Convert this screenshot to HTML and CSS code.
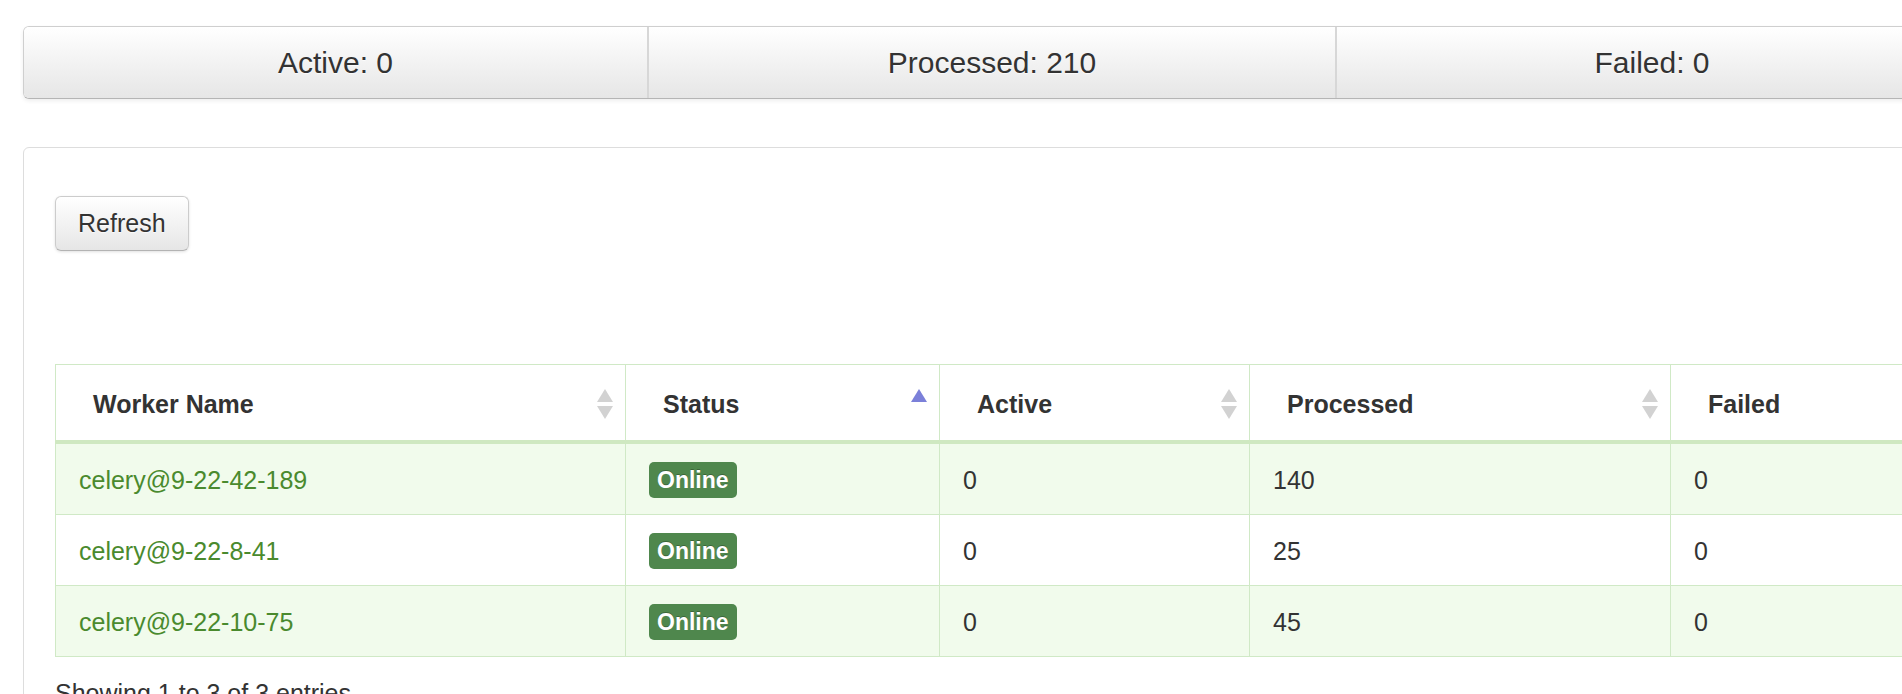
FILE: index.html
```html
<!DOCTYPE html>
<html lang="en">
<head>
<meta charset="utf-8">
<title>Workers</title>
<link rel="stylesheet" href="styles.css">
</head>
<body>
<div class="page">
  <div class="stats">
    <div class="stat">Active: 0</div>
    <div class="stat">Processed: 210</div>
    <div class="stat">Failed: 0</div>
  </div>

  <div class="panel">
    <button class="btn" type="button">Refresh</button>

    <table class="workers">
      <colgroup>
        <col class="c-name">
        <col class="c-status">
        <col class="c-active">
        <col class="c-processed">
        <col class="c-failed">
      </colgroup>
      <thead>
        <tr>
          <th><div class="th-inner"><span>Worker Name</span>
            <svg class="sort" viewBox="0 0 16 30" width="16" height="30"><polygon points="8,0 16,13 0,13"/><polygon points="0,17 16,17 8,30"/></svg></div></th>
          <th><div class="th-inner"><span>Status</span>
            <svg class="sort asc" viewBox="0 0 16 30" width="16" height="30"><polygon points="8,0 16,13 0,13"/></svg></div></th>
          <th><div class="th-inner"><span>Active</span>
            <svg class="sort" viewBox="0 0 16 30" width="16" height="30"><polygon points="8,0 16,13 0,13"/><polygon points="0,17 16,17 8,30"/></svg></div></th>
          <th><div class="th-inner"><span>Processed</span>
            <svg class="sort" viewBox="0 0 16 30" width="16" height="30"><polygon points="8,0 16,13 0,13"/><polygon points="0,17 16,17 8,30"/></svg></div></th>
          <th><div class="th-inner"><span>Failed</span>
            <svg class="sort" viewBox="0 0 16 30" width="16" height="30"><polygon points="8,0 16,13 0,13"/><polygon points="0,17 16,17 8,30"/></svg></div></th>
        </tr>
      </thead>
      <tbody>
        <tr class="odd">
          <td><a class="worker" href="#">celery@9-22-42-189</a></td>
          <td><span class="badge">Online</span></td>
          <td>0</td>
          <td>140</td>
          <td>0</td>
        </tr>
        <tr class="even">
          <td><a class="worker" href="#">celery@9-22-8-41</a></td>
          <td><span class="badge">Online</span></td>
          <td>0</td>
          <td>25</td>
          <td>0</td>
        </tr>
        <tr class="odd">
          <td><a class="worker" href="#">celery@9-22-10-75</a></td>
          <td><span class="badge">Online</span></td>
          <td>0</td>
          <td>45</td>
          <td>0</td>
        </tr>
      </tbody>
    </table>

    <div class="info">Showing 1 to 3 of 3 entries</div>
  </div>
</div>
</body>
</html>
```

FILE: styles.css
```css
html, body {
  margin: 0;
  padding: 0;
  overflow: hidden;
  background: #fff;
}

body {
  font-family: "Liberation Sans", Arial, Helvetica, sans-serif;
  color: #333;
}

.page {
  width: 1944px;
  padding: 26px 0 0 23px;
}

/* ---------- stats bar ---------- */
.stats {
  display: grid;
  grid-template-columns: 623px 688px 632px;
  height: 73px;
  box-sizing: border-box;
  border: 1px solid #cfcfcf;
  border-bottom-color: #b5b5b5;
  border-radius: 6px;
  overflow: hidden;
  box-shadow: 0 2px 4px rgba(0, 0, 0, 0.07);
}

.stat {
  display: flex;
  align-items: center;
  justify-content: center;
  font-size: 30px;
  color: #333;
  text-shadow: 0 1px 1px rgba(255, 255, 255, 0.75);
  background: linear-gradient(#ffffff, #e6e6e6);
}

.stat + .stat {
  border-left: 2px solid #d7d7d7;
}

/* ---------- panel ---------- */
.panel {
  margin-top: 48px;
  height: 640px;
  border: 1px solid #dddddd;
  border-radius: 6px;
  padding: 48px 0 0 31px;
}

.btn {
  display: block;
  font-family: "Liberation Sans", Arial, Helvetica, sans-serif;
  font-size: 25px;
  line-height: 35px;
  padding: 9px 22px;
  color: #333;
  border: 1px solid #cccccc;
  border-bottom-color: #b3b3b3;
  border-radius: 6px;
  background: linear-gradient(#ffffff, #e6e6e6);
  text-shadow: 0 1px 1px rgba(255, 255, 255, 0.75);
  box-shadow: inset 0 1px 0 rgba(255, 255, 255, 0.2), 0 1px 3px rgba(0, 0, 0, 0.12);
}

/* ---------- table ---------- */
.workers {
  margin-top: 113px;
  width: 1880px;
  table-layout: fixed;
  border-collapse: collapse;
  font-size: 25px;
  line-height: 36px;
}

.c-name { width: 570px; }
.c-status { width: 314px; }
.c-active { width: 310px; }
.c-processed { width: 421px; }
.c-failed { width: 265px; }

.workers th,
.workers td {
  border: 1px solid #d0e9c6;
  text-align: left;
}

.workers th {
  font-weight: bold;
  background: #fff;
  padding: 21px 12px 18px 37px;
  border-bottom: 4px solid #cfe8c1;
}

.th-inner {
  display: flex;
  align-items: center;
  justify-content: space-between;
}

.sort {
  display: block;
  flex: none;
  fill: #d2d2d2;
}

.sort.asc {
  fill: #7b80d9;
}

.workers td {
  padding: 18px 23px 16px;
  color: #333;
}

.workers tr.odd td {
  background: #f1fbec;
}

.workers tr.even td {
  background: #ffffff;
}

.worker {
  color: #4a8a2e;
  text-decoration: none;
}

.badge {
  display: inline-block;
  vertical-align: top;
  height: 36px;
  line-height: 36px;
  padding: 0 8px;
  font-size: 23px;
  font-weight: bold;
  color: #fff;
  background: #4f874d;
  border-radius: 5px;
  text-shadow: 0 -1px 0 rgba(0, 0, 0, 0.25);
}

.info {
  margin-top: 18px;
  font-size: 25px;
  line-height: 36px;
  color: #333;
}
```
